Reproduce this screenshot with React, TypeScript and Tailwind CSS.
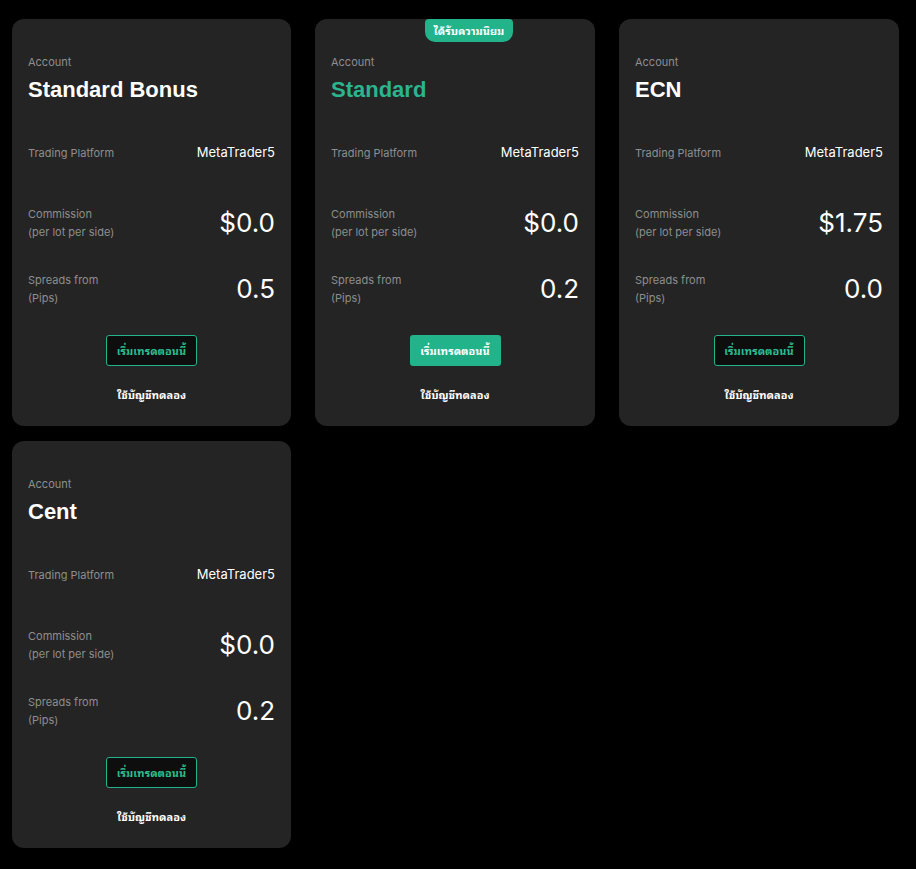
import React from "react";

type Acc = {
  name: string;
  commission: string;
  spread: string;
  popular?: boolean;
};

const accounts: Acc[] = [
  { name: "Standard Bonus", commission: "$0.0", spread: "0.5" },
  { name: "Standard", commission: "$0.0", spread: "0.2", popular: true },
  { name: "ECN", commission: "$1.75", spread: "0.0" },
  { name: "Cent", commission: "$0.0", spread: "0.2" },
];

const inter = "font-['Inter','Noto_Sans','Noto_Sans_Thai',sans-serif]";
const thai =
  "font-['Tahoma','Leelawadee_UI','Noto_Sans_Thai_Looped','Loma','Garuda','Noto_Sans_Thai','Noto_Sans',sans-serif]";

function Card({ a }: { a: Acc }) {
  return (
    <div className={`relative flex flex-col rounded-xl bg-[#242424] px-4 pt-[35px] pb-[23px] ${inter}`}>
      {a.popular && (
        <div
          className={`absolute top-0 left-[110px] flex h-[23px] w-[88px] items-center justify-center rounded-b-[10px] rounded-t-[4px] bg-[#22b38b] text-[11px] font-bold text-white ${thai}`}
        >
          ได้รับความนิยม
        </div>
      )}
      <div className="text-[11px] leading-4 text-[#8e8e8e]">Account</div>
      <div
        className={`mt-[6px] text-[22px] leading-7 font-bold font-['Liberation_Sans',Arial,sans-serif] ${
          a.popular ? "text-[#2bb58e]" : "text-white"
        }`}
      >
        {a.name}
      </div>
      <div className="mt-[40px] flex h-[18px] items-center justify-between">
        <span className="text-[11px] text-[#8e8e8e]">Trading Platform</span>
        <span className="text-[13px] text-white">MetaTrader5</span>
      </div>
      <div className="mt-[43px] flex h-[36px] items-center justify-between">
        <div className="text-[11px] leading-[18px] text-[#8e8e8e]">
          <div>Commission</div>
          <div>(per lot per side)</div>
        </div>
        <span className="text-[26px] leading-none text-white">{a.commission}</span>
      </div>
      <div className="mt-[30px] flex h-[36px] items-center justify-between">
        <div className="text-[11px] leading-[18px] text-[#8e8e8e]">
          <div>Spreads from</div>
          <div>(Pips)</div>
        </div>
        <span className="text-[26px] leading-none text-white">{a.spread}</span>
      </div>
      <div className="mt-[28px] flex justify-center">
        {a.popular ? (
          <button
            className={`flex h-[31px] w-[91px] items-center justify-center rounded-[3px] bg-[#22b38b] text-[11px] font-bold text-white ${thai}`}
          >
            เริ่มเทรดตอนนี้
          </button>
        ) : (
          <button
            className={`flex h-[31px] w-[91px] items-center justify-center rounded-[3px] border border-[#22b38b] bg-[#0e0e0e] text-[11px] font-bold text-[#2bbf90] ${thai}`}
          >
            เริ่มเทรดตอนนี้
          </button>
        )}
      </div>
      <div className={`mt-[19px] text-center text-[11px] leading-[18px] font-bold text-white ${thai}`}>
        ใช้บัญชีทดลอง
      </div>
    </div>
  );
}

export default function App() {
  return (
    <div className="min-h-[869px] w-full bg-black pt-[19px] pl-3">
      <div className="grid grid-cols-[279px_280px_280px] gap-x-6 gap-y-[15px]">
        {accounts.map((a) => (
          <Card key={a.name} a={a} />
        ))}
      </div>
    </div>
  );
}
